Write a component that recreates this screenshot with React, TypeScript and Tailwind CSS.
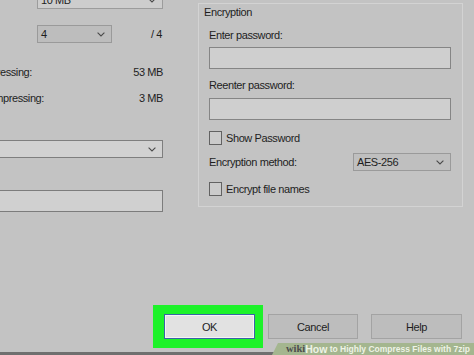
import React from 'react';

// ── Small pieces ──────────────────────────────────────────────────────────────

function Chevron() {
  return (
    <svg width="8" height="5" viewBox="0 0 8 5" aria-hidden="true">
      <path d="M0.6 0.6 L4 4 L7.4 0.6" fill="none" stroke="#4a4a4a" strokeWidth="1.1" />
    </svg>
  );
}

function Select({ value, className }: { value?: string; className: string }) {
  return (
    <div className={`flex items-center justify-between border px-[3px] pr-[6px] ${className}`}>
      <span>{value}</span>
      <Chevron />
    </div>
  );
}

function Checkbox({ label }: { label: string }) {
  return (
    <div className="flex items-center gap-[4px] h-[14px]">
      <span className="h-[14px] w-[13px] border border-[#626262] bg-[#cbcbcb]" />
      <span>{label}</span>
    </div>
  );
}

// Label whose start is cut off by the left edge of the crop
function CutLabel({ text, width }: { text: string; width: string }) {
  return (
    <div className={`flex justify-end overflow-hidden ${width}`}>
      <span className="shrink-0 whitespace-nowrap">{text}</span>
    </div>
  );
}

// ── Main export ───────────────────────────────────────────────────────────────

export default function App() {
  return (
    <div className="relative flex h-[355px] w-[474px] flex-col overflow-hidden bg-[#c3c3c3] font-['Liberation_Sans',Arial,sans-serif] text-[11px] leading-[14px] tracking-[-0.4px] text-[#1e1e1e]">
      <div className="flex h-[305px]">
        {/* Left column (cropped dialog side) */}
        <div className="flex w-[163px] flex-col">
          <Select value="10 MB" className="-mt-[9px] ml-[37px] h-[18px] border-[#9c9c9c] bg-[#cdcdcd]" />

          <div className="mt-[16px] flex items-center">
            <Select value="4" className="ml-[37px] h-[18px] w-[75px] border-[#9a9a9a] bg-[#bdbdbd]" />
            <span className="flex-1 pr-[1px] text-right">/ 4</span>
          </div>

          <div className="mt-[22px] flex items-center justify-between">
            <CutLabel text="Memory usage for Compressing:" width="w-[32px]" />
            <span>53 MB</span>
          </div>

          <div className="mt-[12px] flex items-center justify-between">
            <CutLabel text="Memory usage for Decompressing:" width="w-[44px]" />
            <span>3 MB</span>
          </div>

          <Select className="-ml-[2px] mt-[35px] h-[18px] border-[#7e7e7e] bg-[#d1d1d1]" />

          <div className="-ml-[2px] mt-[32px] h-[22px] border border-[#7c7c7c] bg-[#d0d0d0]" />
        </div>

        {/* Encryption group */}
        <div className="ml-[35px] mt-[3px] flex h-[204px] w-[265px] flex-col border border-[#d3d3d3] pl-[10px] pr-[11px]">
          <span className="-ml-[5px] mt-[1px]">Encryption</span>

          <span className="mt-[9px]">Enter password:</span>
          <div className="mt-[5px] h-[22px] border border-[#858585] bg-[#cfcfcf]" />

          <span className="mt-[9px]">Reenter password:</span>
          <div className="mt-[6px] h-[22px] border border-[#858585] bg-[#cfcfcf]" />

          <div className="mt-[11px]">
            <Checkbox label="Show Password" />
          </div>

          <div className="mt-[8px] flex items-center justify-between">
            <span>Encryption method:</span>
            <Select value="AES-256" className="h-[18px] w-[98px] border-[#9a9a9a] bg-[#bfbfbf]" />
          </div>

          <div className="mt-[11px]">
            <Checkbox label="Encrypt file names" />
          </div>
        </div>
      </div>

      {/* Buttons */}
      <div className="flex items-center">
        <div className="ml-[153px] bg-[#1df22a] pb-[9px] pl-[11px] pr-[8px] pt-[9px]">
          <div className="flex h-[25px] w-[91px] items-center justify-center border border-[#3a63a6] bg-[#e2e2e2] shadow-[inset_0_0_0_1px_#f4f4f4]">
            OK
          </div>
        </div>
        <div className="ml-[5px] flex h-[25px] w-[90px] items-center justify-center border border-[#a3a3a3] bg-[#bdbdbd]">
          Cancel
        </div>
        <div className="ml-[13px] flex h-[25px] w-[91px] items-center justify-center border border-[#a3a3a3] bg-[#bdbdbd]">
          Help
        </div>
      </div>

      <div className="mt-[4px] h-[3px] bg-[#6f6f6f]" />

      {/* wikiHow watermark */}
      <div className="absolute bottom-0 right-0 flex h-[12px] w-[202px] items-center justify-end whitespace-nowrap bg-[#a4b68f] pr-[4px] font-['Liberation_Sans',Arial,sans-serif] text-[8.5px] font-bold leading-none tracking-[0px] text-[#eef3e6] [clip-path:polygon(6px_0,100%_0,100%_100%,0_100%)]">
        <span className="font-['Liberation_Serif',serif] text-[10.5px] text-[#4d4d4d]">wiki</span>
        <span className="text-[10.5px]">How</span>
        <span>&nbsp;to Highly Compress Files with 7zip</span>
      </div>
    </div>
  );
}
